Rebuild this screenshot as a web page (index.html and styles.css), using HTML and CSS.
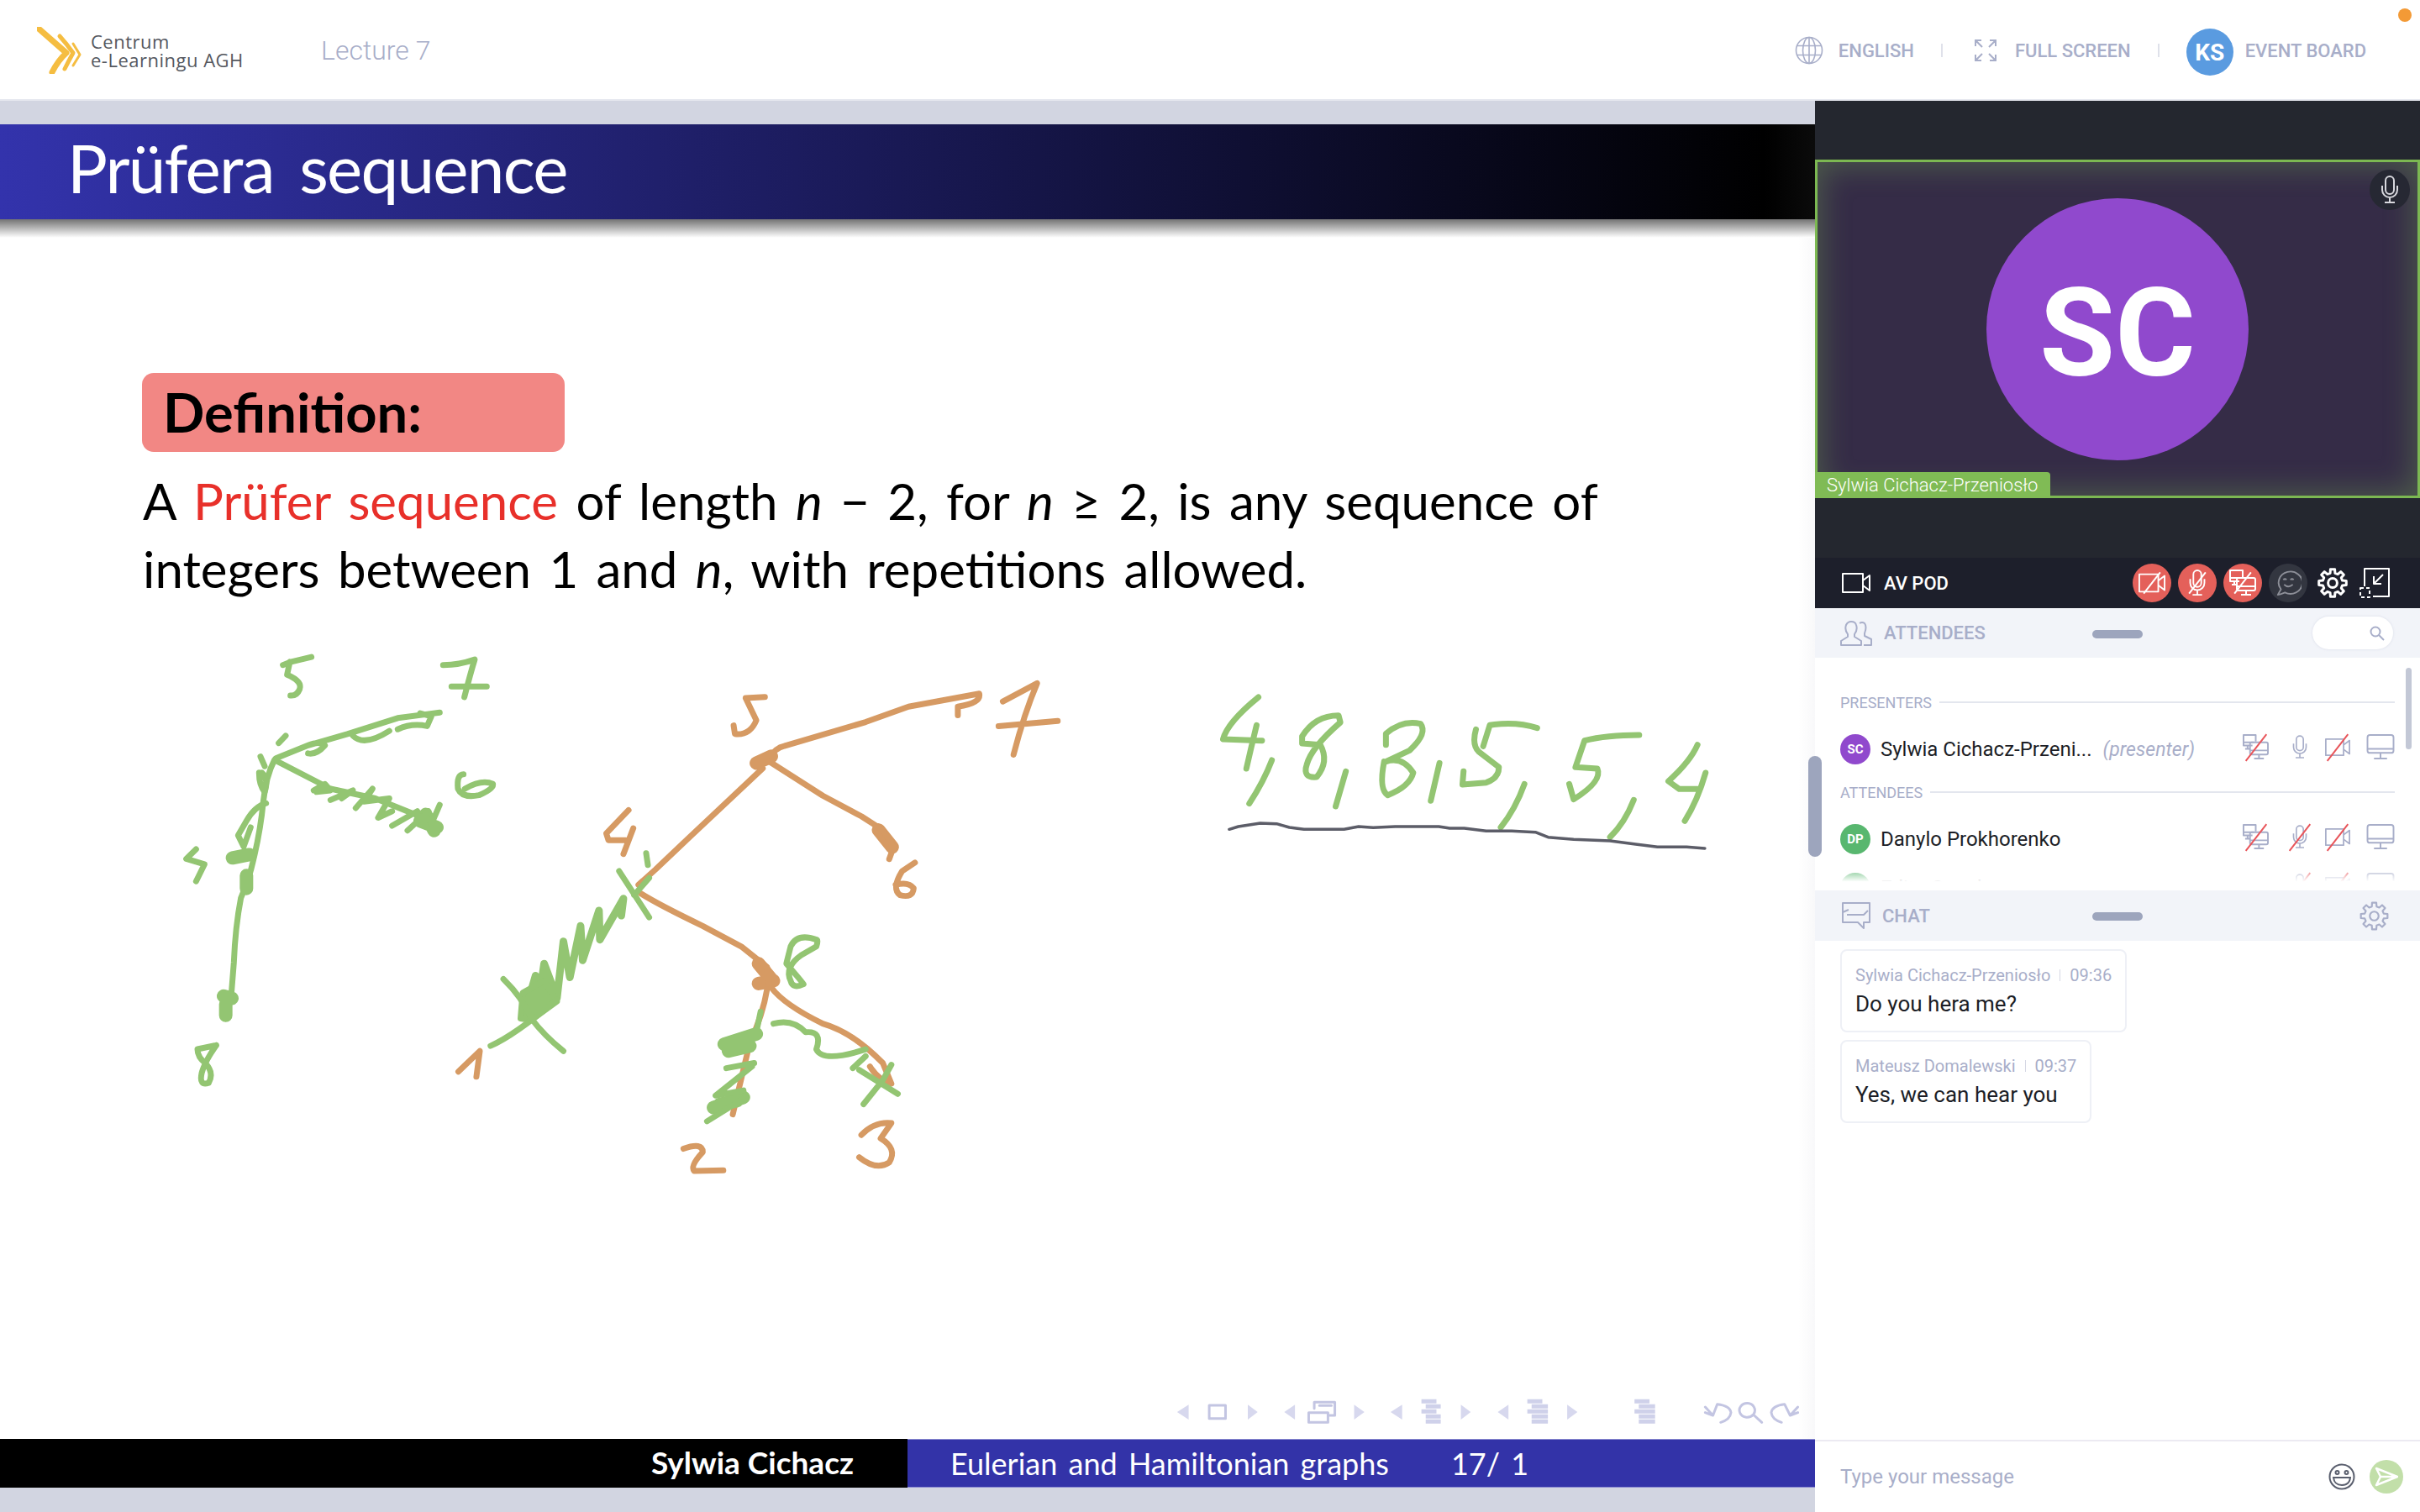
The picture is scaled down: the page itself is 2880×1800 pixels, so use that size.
FILE: index.html
```html
<!doctype html>
<html lang="en">
<head>
<meta charset="utf-8">
<title>Lecture 7</title>
<link rel="stylesheet" href="styles.css">
</head>
<body>
<svg class="defs" width="0" height="0">
  <symbol id="i-video" viewBox="0 0 34 24"><rect x="1" y="1" width="24" height="22"/><path d="M25 9 33 3V21L25 15"/></symbol>
  <symbol id="i-mic" viewBox="0 0 24 34"><rect x="7" y="1" width="10" height="21" rx="5"/><path d="M3 12v5a9 9 0 0 0 18 0v-5M12 26v6M6 32h12"/></symbol>
  <symbol id="i-screens" viewBox="0 0 32 32"><path d="M12 14H1V1H16V9M1 10H14M6 14v3M3 18h6"/><rect x="9" y="10" width="22" height="15" rx="2"/><path d="M9 20H31M20 25v5M14 30h12"/></symbol>
  <symbol id="i-monitor" viewBox="0 0 34 32"><rect x="1" y="1" width="32" height="22" rx="3"/><path d="M1 18H33M17 23v7M9 30H25"/></symbol>
  <symbol id="i-gear" viewBox="0 0 24 24"><circle cx="12" cy="12" r="3.6"/><path d="M10.06 4.24 10.28 1.14H13.72L13.94 4.24 16.12 5.14 18.47 3.1 20.9 5.53 18.86 7.88 19.76 10.06 22.86 10.28V13.72L19.76 13.94 18.86 16.12 20.9 18.47 18.47 20.9 16.12 18.86 13.94 19.76 13.72 22.86H10.28L10.06 19.76 7.88 18.86 5.53 20.9 3.1 18.47 5.14 16.12 4.24 13.94 1.14 13.72V10.28L4.24 10.06 5.14 7.88 3.1 5.53 5.53 3.1 7.88 5.14Z"/></symbol>
</svg>

<header class="topbar">
  <div class="logo">
    <svg class="logo-mark" viewBox="0 0 54 56">
      <path class="c1" d="M2 2Q18 16 35 31 25 40 18 54"/>
      <path class="c2" d="M27 11Q36 21 43 31 38 40 33 50"/>
      <path class="c3" d="M43 20 51 33 43 46"/>
    </svg>
    <div class="logo-text"><span>Centrum</span><span>e-Learningu AGH</span></div>
  </div>
  <div class="lecture">Lecture 7</div>
  <nav class="topnav">
    <svg class="globe" viewBox="0 0 34 34"><circle cx="17" cy="17" r="15.5"/><ellipse cx="17" cy="17" rx="7.5" ry="15.5"/><path d="M17 1.5V32.5M2.5 11.5H31.5M2.5 22.5H31.5"/></svg>
    <span class="nav-label">English</span>
    <i class="nav-sep wide"></i>
    <svg class="fullscreen" viewBox="0 0 26 26"><path d="M1 8V1H8M1 1 9 9M25 8V1H18M25 1 17 9M1 18V25H8M1 25 9 17M25 18V25H18M25 25 17 17"/></svg>
    <span class="nav-label">Full screen</span>
    <i class="nav-sep"></i>
    <span class="me-avatar">KS</span>
    <span class="nav-label">Event board</span>
  </nav>
  <i class="rec-dot"></i>
</header>

<main class="workspace">
  <section class="slide">
    <div class="slide-title"><h1>Prüfera sequence</h1></div>
    <div class="slide-body">
      <div class="def-box">Definition:</div>
      <p class="def-text">A <span class="red">Prüfer sequence</span> of length <em>n</em> − 2, for <em>n</em> ≥ 2, is any sequence of<br>integers between 1 and <em>n</em>, with repetitions allowed.</p>

      <svg class="ink" viewBox="0 261 2160 1452">
        <!-- left tree -->
        <g class="green" transform="translate(180 740) scale(.3333 .3827)">
          <path d="M572 110 500 125 470 135M495 125 485 165Q540 185 530 210 520 232 497 230"/>
          <path d="M1042 135Q1100 135 1155 118 1140 160 1118 235M1072 202H1198"/>
          <path d="M445 425 560 385 700 350 880 300 1030 283M560 410Q590 415 620 385 600 370 560 385M720 355Q760 390 850 340M880 335Q930 315 985 325L1000 295 960 285"/>
          <path d="M455 378 480 355M390 420 405 450"/>
          <path d="M440 430Q410 480 400 560 390 650 365 740 350 800 320 860 300 950 295 1060L285 1170 265 1235"/>
          <path d="M385 470Q385 510 405 530 420 490 395 470M410 565Q370 575 340 620L310 665 330 700 355 640"/>
          <path class="thick" d="M290 735 350 725M340 790V830M258 1165 288 1172M266 1190V1225M960 620 1020 640M980 600 1010 650"/>
          <path d="M450 435 640 520 800 550 1000 620M580 525 620 505 640 525 590 530M640 555 720 525 680 550M730 580 790 520 760 560 850 550 810 610 860 590M860 635 950 590M915 650 990 590M1030 570 1000 630"/>
          <path d="M1115 475Q1090 475 1095 520 1110 550 1170 540 1225 520 1220 505 1180 490 1120 520"/>
          <path d="M160 708 125 738 190 755 160 808"/>
          <path d="M232 1318 165 1330Q165 1355 195 1375 225 1405 205 1435 170 1445 180 1405 190 1370 232 1318"/>
        </g>
        <!-- right tree -->
        <g class="orange" transform="translate(520 780) scale(.5102 .408)">
          <path d="M775 300Q790 270 810 265L1000 195 1100 150 1265 112Q1270 140 1215 150V175"/>
          <path class="thick" d="M745 315 780 295M1030 510 1062 560M750 900 780 945M750 958 785 950"/>
          <path d="M765 122 720 125 745 190Q730 235 695 230L692 205"/>
          <path d="M1320 135 1400 82Q1370 170 1345 290M1310 207 1448 192"/>
          <path d="M760 330Q700 400 590 530L510 625 470 670"/>
          <path d="M775 310 900 410 990 470 1040 510 1065 560 1055 595"/>
          <path d="M1115 605 1085 630Q1060 680 1080 700 1110 710 1112 680 1100 660 1070 670"/>
          <path d="M447 452 395 520 400 540H440M458 505 435 580"/>
          <path d="M475 695Q520 730 620 790L710 850 770 910 775 960"/>
          <path d="M770 975Q760 1050 730 1130L690 1340"/>
          <path d="M780 970Q810 1020 900 1075 970 1100 1040 1190L1060 1250Q1030 1240 1010 1200"/>
          <path d="M50 1215 100 1155 92 1230"/>
          <path d="M575 1440Q620 1420 620 1450 590 1490 600 1505L668 1503"/>
          <path d="M990 1400Q1020 1360 1060 1365L1035 1410Q1075 1440 1055 1480 1025 1505 985 1465"/>
        </g>
        <g class="green" transform="translate(520 780) scale(.5102 .408)">
          <path d="M488 578 492 612M425 630 495 765M495 650 460 700"/>
          <path class="teeth" d="M430 760 435 710 380 830 378 745 340 890 335 790 310 940 295 835 280 1000 250 900 235 1030 230 935 215 1000"/>
          <path class="solid" d="M195 1060 200 985 250 950 280 1010 220 1065Z"/>
          <path d="M125 1140Q180 1110 280 1005M155 945Q200 1000 220 1060 250 1110 295 1155"/>
          <path d="M755 1040 745 1100"/>
          <path class="thick" d="M670 1135 745 1105M680 1155 730 1140M645 1320 715 1290M660 1310 700 1300"/>
          <path d="M740 1190 675 1205M735 1200 650 1285 715 1270M720 1290 630 1360"/>
          <path d="M785 1075Q830 1060 860 1100 900 1095 885 1150 900 1190 1000 1150M970 1205 1000 1170"/>
          <path d="M985 1210 1075 1280M1060 1195 1040 1240 995 1310"/>
          <path d="M885 830Q840 810 825 850L815 900Q850 950 855 960 830 975 825 950 810 910 850 875L885 850Q890 830 885 830"/>
        </g>
        <!-- written sequence -->
        <g class="green" transform="translate(1400 780) scale(.4337 .3333)">
          <path d="M225 150Q140 240 128 300L235 305M220 250Q205 330 192 405M262 375Q240 450 200 530"/>
          <path d="M445 215Q380 215 345 290V315L395 320Q420 380 385 435 345 440 358 390 370 330 450 240ZM465 415 437 540"/>
          <path d="M575 320V280Q620 230 670 245 690 280 640 340L575 380Q620 360 650 420 640 470 580 500 555 480 570 380M722 385 698 520"/>
          <path d="M990 260Q930 235 860 250L842 325M822 265Q810 320 830 345L885 400Q885 440 850 455L785 462 788 415M955 460Q930 550 890 615"/>
          <path d="M1270 285Q1180 285 1120 305L1095 400 1155 405Q1170 450 1090 515L1078 460M1255 517Q1230 600 1190 650"/>
          <path d="M1430 320Q1410 380 1350 450L1380 478H1430M1452 420Q1430 520 1395 592"/>
          <path class="underline" d="M145 622 170 612 230 600 275 602 310 615 350 622H460L500 612 540 616 600 612H720L750 618 790 618 850 628H920L985 632 1020 650 1090 658 1190 663 1260 675 1320 685H1400L1450 690"/>
        </g>
        <!-- beamer navigation symbols -->
        <g class="beamer" transform="translate(1360 1640) scale(.5102 .3333)">
          <path class="tri" d="M107 97V150L80 123ZM245 97V150L268 123ZM355 97V150L330 123ZM493 97V150L517 123ZM605 97V150L578 123ZM742 97V150L765 123ZM853 97V150L828 123ZM990 97V150L1014 123Z"/>
          <rect x="155" y="99" width="38" height="47"/>
          <path d="M400 110V88H448V135H432M412 100H440M387 125H432V160H387Z"/>
          <path class="bars" d="M650 85H685M660 103H695M650 121H685M660 139H695M660 157H695"/>
          <path class="bars" d="M897 85H932M907 103H945M897 121H945M907 139H945M907 157H945"/>
          <path class="bars" d="M1147 85H1182M1157 103H1195M1147 121H1195M1157 139H1195M1157 157H1195"/>
          <path d="M1312 125 1330 135 1340 95Q1370 100 1372 125 1370 150 1348 160M1312 105 1330 135"/>
          <path d="M1425 130A18 25 0 1 0 1424 132L1444 160"/>
          <path d="M1528 105 1510 135 1497 95Q1468 100 1466 125 1468 150 1490 160M1528 125 1510 135"/>
        </g>
      </svg>
    </div>
    <div class="slide-foot">
      <div class="foot-author">Sylwia Cichacz</div>
      <div class="foot-info"><span>Eulerian and Hamiltonian graphs</span><span class="foot-page">17/ 1</span></div>
    </div>
  </section>

  <aside class="side">
    <section class="av-pod">
      <div class="tile">
        <div class="tile-avatar">SC</div>
        <span class="tile-mic"><svg class="ico"><use href="#i-mic"/></svg></span>
        <span class="tile-name">Sylwia Cichacz-Przeniosło</span>
      </div>
      <div class="av-bar">
        <svg class="ico av-video"><use href="#i-video"/></svg>
        <span class="av-title">AV Pod</span>
        <div class="av-buttons">
          <span class="av-btn off"><svg class="ico"><use href="#i-video"/></svg></span>
          <span class="av-btn off"><svg class="ico"><use href="#i-mic"/></svg></span>
          <span class="av-btn off"><svg class="ico"><use href="#i-screens"/></svg></span>
          <span class="av-btn muted">
            <svg class="ico" viewBox="0 0 34 34"><path d="M4 32 8 25A15 14 0 1 1 13 29Q8 31 4 32Z"/><path d="M11 13Q13 11 15 13M20 13Q22 11 24 13M12 19Q17 24 23 19"/></svg>
          </span>
          <svg class="ico av-gear"><use href="#i-gear"/></svg>
          <svg class="ico av-shrink" viewBox="0 0 36 36"><path d="M6 22V1H35V34H16M28 8 17 19M17 10V19H26"/><path class="dash" d="M1 24H12V35H1Z"/></svg>
        </div>
      </div>
    </section>

    <div class="pod-head">
      <svg class="ico head-ico" viewBox="0 0 38 30"><path d="M1 29V24L9 19V16Q5 11 7 5 9 1 13 1 18 1 19 5 21 11 17 16V19L25 24V29ZM23 3Q26 1 29 3 32 7 29 15V18L37 22V29H28"/></svg>
      <span class="head-title">Attendees</span>
      <i class="head-grip"></i>
      <div class="search"><svg viewBox="0 0 18 18"><circle cx="7" cy="7" r="5.5"/><path d="M11 11 17 17"/></svg></div>
    </div>

    <div class="att-list">
      <div class="att-group"><span>Presenters</span><i></i></div>
      <div class="att-row">
        <span class="avatar purple">SC</span>
        <span class="att-name">Sylwia Cichacz-Przeni...</span>
        <span class="att-role">(presenter)</span>
        <div class="att-icons">
          <span class="att-ico screens struck"><svg class="ico"><use href="#i-screens"/></svg></span>
          <span class="att-ico mic"><svg class="ico"><use href="#i-mic"/></svg></span>
          <span class="att-ico video struck"><svg class="ico"><use href="#i-video"/></svg></span>
          <span class="att-ico monitor"><svg class="ico"><use href="#i-monitor"/></svg></span>
        </div>
      </div>
      <div class="att-group"><span>Attendees</span><i></i></div>
      <div class="att-row">
        <span class="avatar green-bg">DP</span>
        <span class="att-name">Danylo Prokhorenko</span>
        <div class="att-icons">
          <span class="att-ico screens struck"><svg class="ico"><use href="#i-screens"/></svg></span>
          <span class="att-ico mic struck"><svg class="ico"><use href="#i-mic"/></svg></span>
          <span class="att-ico video struck"><svg class="ico"><use href="#i-video"/></svg></span>
          <span class="att-ico monitor"><svg class="ico"><use href="#i-monitor"/></svg></span>
        </div>
      </div>
      <div class="att-row">
        <span class="avatar green-bg">EG</span>
        <span class="att-name">Edita Gawda</span>
        <div class="att-icons">
          <span class="att-ico screens"></span>
          <span class="att-ico mic struck"><svg class="ico"><use href="#i-mic"/></svg></span>
          <span class="att-ico video struck"><svg class="ico"><use href="#i-video"/></svg></span>
          <span class="att-ico monitor"><svg class="ico"><use href="#i-monitor"/></svg></span>
        </div>
      </div>
      <i class="att-thumb"></i>
    </div>

    <div class="pod-head chat-head">
      <svg class="ico head-ico" viewBox="0 0 34 32"><path d="M1 1H33V24H26V31L19 24H1ZM1 12 8 9M6 15H26L31 10"/></svg>
      <span class="head-title">Chat</span>
      <i class="head-grip"></i>
      <svg class="ico chat-gear"><use href="#i-gear"/></svg>
    </div>

    <div class="messages">
      <div class="msg">
        <div class="msg-meta"><span>Sylwia Cichacz-Przeniosło</span><i></i><span>09:36</span></div>
        <div class="msg-text">Do you hera me?</div>
      </div>
      <div class="msg">
        <div class="msg-meta"><span>Mateusz Domalewski</span><i></i><span>09:37</span></div>
        <div class="msg-text">Yes, we can hear you</div>
      </div>
    </div>

    <div class="compose">
      <span class="placeholder">Type your message</span>
      <svg class="smiley" viewBox="0 0 32 32"><circle cx="16" cy="16" r="14.5"/><circle cx="10.5" cy="11" r="2"/><circle cx="21.5" cy="11" r="2"/><path d="M6 17H26Q25 26 16 26 7 26 6 17Z"/></svg>
      <span class="send"><svg viewBox="0 0 28 24"><path d="M2 2 27 12 2 22 7 12ZM7 12H27"/></svg></span>
    </div>
    <i class="side-thumb"></i>
  </aside>
</main>
</body>
</html>
```

FILE: styles.css
```css
* { box-sizing: border-box; }

html, body {
  margin: 0;
  width: 2880px;
  height: 1800px;
  overflow: hidden;
}
body {
  background: #fff;
  font-family: Roboto, "Liberation Sans", sans-serif;
  color: #1c1e26;
}
.defs { position: absolute; }
i { display: block; }

/* top bar */
.topbar {
  height: 120px;
  border-bottom: 2px solid #e6e8ef;
  display: flex;
  align-items: center;
  padding: 2px 0 0 44px;
  position: relative;
}
.logo { display: flex; align-items: center; width: 338px; }
.logo-mark { width: 54px; height: 56px; fill: none; stroke: #f5bd41; stroke-linecap: round; stroke-linejoin: round; }
.logo-mark .c1 { stroke-width: 7; }
.logo-mark .c2 { stroke-width: 5; }
.logo-mark .c3 { stroke-width: 3; }
.logo-text {
  display: flex;
  flex-direction: column;
  margin-left: 10px;
  font: 22px/22px "Open Sans", sans-serif;
  color: #55585f;
  letter-spacing: .5px;
}
.lecture { font-size: 32px; font-weight: 300; color: #a8aec9; }
.topnav { margin-left: auto; margin-right: 64px; display: flex; align-items: center; }
.nav-label { font-size: 22px; font-weight: 500; color: #a8aec9; text-transform: uppercase; }
.globe { width: 34px; height: 34px; margin-right: 18px; fill: none; stroke: #a8aec9; stroke-width: 1.6; }
.fullscreen { width: 26px; height: 26px; margin-right: 22px; fill: none; stroke: #a8aec9; stroke-width: 2; }
.nav-sep { width: 2px; height: 16px; background: #dfe1ea; margin: 0 32px; }
.nav-sep.wide { margin-right: 38px; }
.me-avatar {
  width: 56px;
  height: 56px;
  border-radius: 50%;
  background: #5a9be0;
  color: #fff;
  font-size: 28px;
  font-weight: 700;
  display: flex;
  align-items: center;
  justify-content: center;
  margin: 4px 14px 0 0;
}
.rec-dot { position: absolute; top: 10px; right: 10px; width: 16px; height: 16px; border-radius: 50%; background: #f39a36; }

.workspace { display: flex; height: 1680px; }

/* slide */
.slide {
  width: 2160px;
  background: #d2d5e1;
  padding: 28px 0 29px;
  display: flex;
  flex-direction: column;
  font-family: Lato, "Liberation Sans", sans-serif;
}
.slide-title {
  height: 113px;
  background: linear-gradient(90deg, #3333ac 0, #000 2100px, #0b0b0b 2160px);
  display: flex;
  align-items: center;
  padding: 0 0 12px 80px;
  position: relative;
  z-index: 1;
}
.slide-title::after {
  content: "";
  position: absolute;
  left: 0;
  right: 0;
  top: 100%;
  height: 22px;
  background: linear-gradient(rgba(0,0,0,.55), rgba(0,0,0,0));
}
.slide-title h1 {
  margin: 0;
  font-size: 80px;
  font-weight: 400;
  color: #fff;
  letter-spacing: -1.8px;
  word-spacing: 12px;
}
.slide-body { flex: 1; background: #fff; position: relative; padding: 183px 0 0 169px; }
.slide-body::after {
  content: "";
  position: absolute;
  right: 0;
  top: 22px;
  bottom: 0;
  width: 20px;
  background: linear-gradient(90deg, rgba(40,40,90,0), rgba(40,40,90,.03));
}
.def-box {
  width: 503px;
  height: 94px;
  background: #f28784;
  border-radius: 14px;
  padding: 0 25px;
  font-size: 65px;
  font-weight: 700;
  line-height: 92px;
  color: #000;
}
.def-text {
  margin: 18px 0 0 1px;
  font-size: 60px;
  line-height: 81px;
  color: #000;
  white-space: nowrap;
  word-spacing: 6px;
}
.def-text .red { color: #e8302a; }

.ink { position: absolute; left: 0; top: 0; width: 2160px; height: 1452px; }
.ink path, .ink rect { vector-effect: non-scaling-stroke; fill: none; stroke-linecap: round; stroke-linejoin: round; stroke-width: 7px; }
.ink .green path { stroke: #93c572; }
.ink .orange path { stroke: #d69a63; }
.ink path.thick { stroke-width: 16px; }
.ink path.teeth { stroke-width: 9px; }
.ink .green path.solid { fill: #93c572; }
.ink .green path.underline { stroke: #5c5d68; stroke-width: 3.5px; }
.ink .beamer path, .ink .beamer rect { stroke: #c3c5e2; stroke-width: 3px; }
.ink .beamer path.tri { fill: #d7d8ee; stroke: none; }
.ink .beamer path.bars { stroke: #cfd1ea; stroke-width: 5px; stroke-linecap: butt; }

.slide-foot { height: 58px; display: flex; font-size: 36px; line-height: 56px; color: #fff; }
.foot-author { width: 1080px; background: #000; text-align: right; padding-right: 64px; font-size: 37px; font-weight: 700; }
.foot-info {
  flex: 1;
  background: #3333a8;
  border-top: 1px solid #8a8ad0;
  border-bottom: 1px solid #8a8ad0;
  padding-left: 51px;
  word-spacing: 4px;
}
.foot-page { margin-left: 74px; }

/* right column */
.side { width: 720px; display: flex; flex-direction: column; position: relative; background: #fff; }
.ico { fill: none; stroke: currentColor; stroke-width: 2; display: block; stroke-linejoin: round; }

.av-pod { height: 604px; background: #24272f; padding-top: 70px; flex: none; }
.tile {
  height: 403px;
  border: 3px solid #7cb852;
  background: #352c47;
  box-shadow: inset 0 0 34px 6px rgba(125,185,85,.32);
  display: flex;
  align-items: center;
  justify-content: center;
  position: relative;
}
.tile-avatar {
  width: 312px;
  height: 312px;
  border-radius: 50%;
  background: #9049cd;
  color: #fff;
  font-size: 146px;
  font-weight: 700;
  display: flex;
  align-items: center;
  justify-content: center;
  padding-top: 12px;
}
.tile-mic {
  position: absolute;
  top: 9px;
  right: 9px;
  width: 48px;
  height: 48px;
  border-radius: 50%;
  background: #262833;
  color: #d8d8de;
  display: flex;
  align-items: center;
  justify-content: center;
}
.tile-mic .ico { width: 24px; height: 36px; }
.tile-name {
  position: absolute;
  left: -3px;
  bottom: -3px;
  width: 280px;
  height: 31px;
  background: #80bb55;
  border-top-right-radius: 4px;
  padding-left: 14px;
  color: #fff;
  font-size: 22px;
  font-weight: 300;
  line-height: 31px;
}
.av-bar {
  height: 60px;
  margin-top: 71px;
  background: #1d1f2b;
  display: flex;
  align-items: center;
  padding-left: 32px;
  color: #fff;
}
.av-video { width: 34px; height: 24px; }
.av-title { margin-left: 16px; font-size: 22px; font-weight: 500; text-transform: uppercase; }
.av-buttons { margin-left: auto; display: flex; align-items: center; gap: 8px; padding-right: 36px; }
.av-btn { width: 46px; height: 46px; border-radius: 50%; display: flex; align-items: center; justify-content: center; position: relative; }
.av-btn .ico { width: 32px; height: 32px; }
.av-btn.off { background: #e4605a; }
.av-btn.off::after {
  content: "";
  position: absolute;
  left: 7px;
  top: 22px;
  width: 32px;
  height: 2px;
  background: #fff;
  transform: rotate(-52deg);
}
.av-btn.muted { background: #333640; color: #8d8f98; }
.av-gear { width: 36px; height: 36px; margin-left: 4px; }
.av-shrink { width: 36px; height: 36px; margin-left: 6px; }
.av-shrink .dash { stroke-dasharray: 4 3; }

.pod-head {
  height: 59px;
  flex: none;
  background: #f2f4f9;
  display: flex;
  align-items: center;
  padding: 0 32px 0 30px;
  position: relative;
  color: #a8aec9;
}
.head-ico { width: 38px; height: 30px; }
.head-title { margin-left: 14px; font-size: 22px; font-weight: 500; text-transform: uppercase; }
.head-grip { position: absolute; left: 330px; top: 26px; width: 60px; height: 10px; border-radius: 5px; background: #9da5bd; }
.search {
  margin-left: auto;
  width: 96px;
  height: 39px;
  border-radius: 20px;
  background: #fff;
  box-shadow: 0 0 3px rgba(168,174,201,.35);
  display: flex;
  align-items: center;
  justify-content: flex-end;
  padding-right: 10px;
}
.search svg { width: 18px; height: 18px; fill: none; stroke: #a8aec9; stroke-width: 2; }

.att-list { height: 277px; flex: none; overflow: hidden; position: relative; padding: 42px 30px 0; }
.att-list::after {
  content: "";
  position: absolute;
  left: 0;
  right: 0;
  bottom: 0;
  height: 26px;
  background: linear-gradient(rgba(255,255,255,.2), #fff 60%);
}
.att-group { display: flex; align-items: center; gap: 9px; height: 22px; font-size: 18px; color: #a8aec9; text-transform: uppercase; }
.att-group i { flex: 1; height: 2px; background: #e3e6ee; }
.att-row { display: flex; align-items: center; height: 36px; margin: 27px 0 22px; font-size: 24px; }
.att-group + .att-row { margin-top: 27px; }
.att-row + .att-row { margin-top: 18px; }
.avatar {
  width: 36px;
  height: 36px;
  border-radius: 50%;
  color: #fff;
  font-size: 15px;
  font-weight: 700;
  display: flex;
  align-items: center;
  justify-content: center;
  margin-right: 12px;
  flex: none;
}
.avatar.purple { background: #9049cd; }
.avatar.green-bg { background: #58b76f; }
.att-role { margin-left: 13px; font-size: 23px; font-style: italic; font-weight: 400; color: #a8aec9; }
.att-icons { margin-left: auto; display: flex; align-items: flex-start; color: #a8aec9; height: 36px; }
.att-ico { display: block; position: relative; height: 31px; }
.att-ico .ico { width: 100%; height: 100%; }
.att-ico.screens { width: 31px; }
.att-ico.mic { width: 20px; margin-left: 27px; }
.att-ico.video { width: 30px; margin-left: 20px; }
.att-ico.monitor { width: 34px; margin-left: 19px; }
.att-ico.struck::after {
  content: "";
  position: absolute;
  left: 50%;
  top: 50%;
  width: 40px;
  height: 2px;
  margin: -1px 0 0 -20px;
  background: #e8555a;
  transform: rotate(-52deg);
}
.att-thumb { position: absolute; right: 10px; top: 12px; width: 7px; height: 97px; border-radius: 4px; background: #c3c8d6; }

.chat-head { height: 60px; padding-right: 37px; }
.chat-head .head-ico { width: 34px; height: 32px; margin-left: 2px; }
.chat-gear { margin-left: auto; width: 35px; height: 35px; stroke-width: 1.5; }

.messages { flex: 1; padding: 10px 30px 0; display: flex; flex-direction: column; align-items: flex-start; gap: 9px; }
.msg {
  border: 2px solid #eef0f6;
  border-radius: 8px;
  height: 99px;
  padding: 17px 16px 0;
}
.msg-meta { display: flex; align-items: center; font-size: 20px; line-height: 24px; color: #a8aec9; white-space: nowrap; }
.msg-meta i { width: 1px; height: 14px; background: #d5d8e4; margin: 0 11px; }
.msg-text { font-size: 26px; line-height: 32px; margin-top: 6px; white-space: nowrap; }

.compose {
  height: 86px;
  flex: none;
  border-top: 2px solid #eceaf2;
  display: flex;
  align-items: center;
  padding: 0 20px 0 30px;
}
.placeholder { font-size: 24px; color: #a8aec9; }
.smiley { margin-left: auto; width: 32px; height: 32px; fill: none; stroke: #5a5f6e; stroke-width: 2; }
.send { margin-left: 17px; width: 40px; height: 40px; border-radius: 50%; background: #c2dfa9; display: flex; align-items: center; justify-content: center; }
.send svg { width: 28px; height: 24px; fill: none; stroke: #fff; stroke-width: 2.5; stroke-linejoin: round; }

.side-thumb { position: absolute; left: -8px; top: 780px; width: 16px; height: 120px; border-radius: 8px; background: #9da5bd; }
```
